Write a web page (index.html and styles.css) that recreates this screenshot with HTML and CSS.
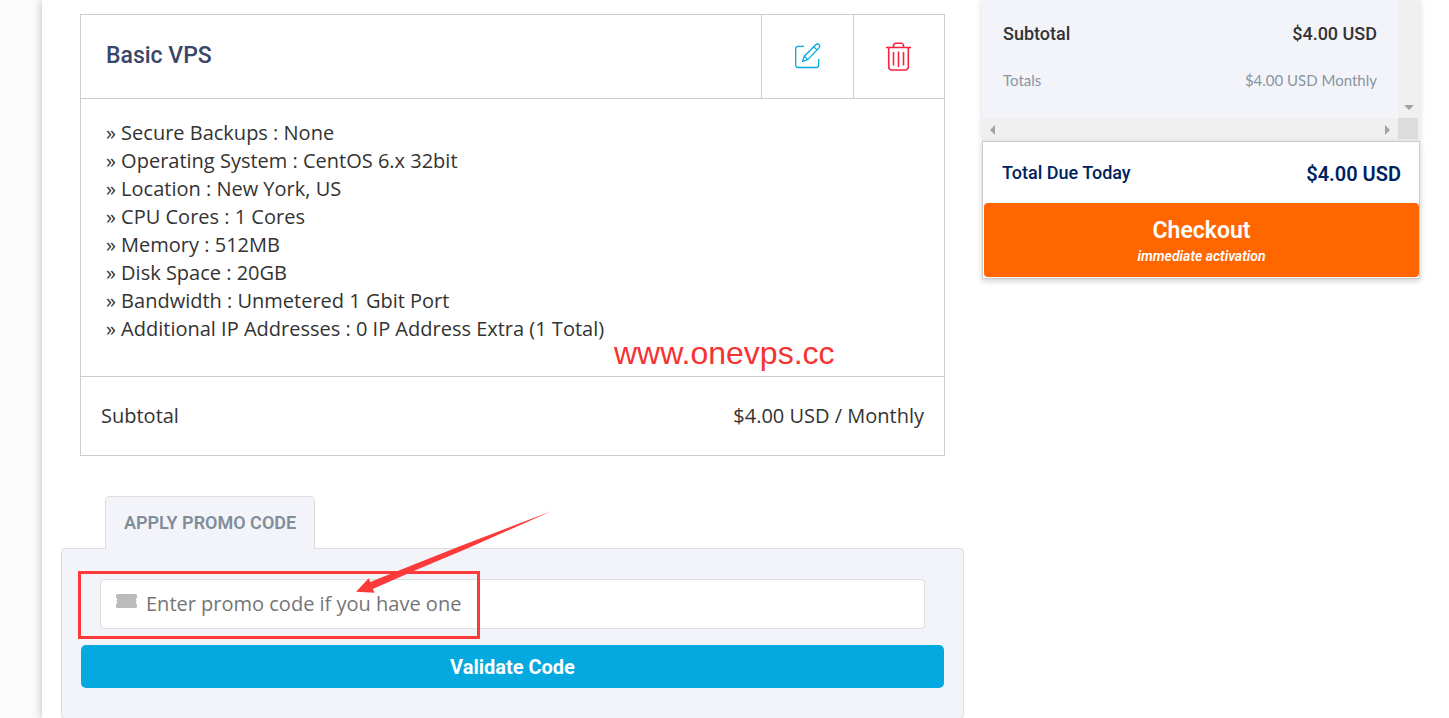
FILE: index.html
```html
<!DOCTYPE html>
<html lang="en">
<head>
  <meta charset="UTF-8">
  <meta name="viewport" content="width=device-width, initial-scale=1.0">
  <title>Review &amp; Checkout</title>
  <link rel="stylesheet" href="styles.css">
</head>
<body>
  <div class="page">
    <main class="cart">
      <section class="order">
        <div class="order-head">
          <h2 class="order-name">Basic VPS</h2>
          <button type="button" class="order-action edit" aria-label="Edit">
            <svg width="26" height="26" viewBox="0 0 26 26" fill="none" stroke="currentColor" stroke-width="1.3" stroke-linejoin="round">
              <path d="M9 3.300H3.200A2.500 2.500 0 0 0 .7 5.800v16.200a2.500 2.500 0 0 0 2.500 2.500h18a2.500 2.500 0 0 0 2.500-2.500v-6"/>
              <path d="M7.500 18.500l1.800-5.200L20.800 1.700q1.600-1.500 3.200 0t0 3.200L12.700 16.600z"/>
              <path d="M9.300 13.300l3.400 3.300M18.800 3.700l3.400 3.400"/>
            </svg>
          </button>
          <button type="button" class="order-action remove" aria-label="Remove">
            <svg width="26" height="30" viewBox="0 0 26 30" fill="none" stroke="currentColor" stroke-width="1.600">
              <path d="M0 5.500h25M2.700 5.500v19.500a3 3 0 0 0 3 3h13.600a3 3 0 0 0 3-3V5.500M7.500 5V3.500A2.200 2.200 0 0 1 9.700 1.300h5.600A2.200 2.200 0 0 1 17.500 3.500V5"/>
              <path d="M7.500 10v13.500M12.500 9.500v15.500M17.500 10v13.500"/>
            </svg>
          </button>
        </div>
        <ul class="order-options">
          <li>» Secure Backups : None</li>
          <li>» Operating System : CentOS 6.x 32bit</li>
          <li>» Location : New York, US</li>
          <li>» CPU Cores : 1 Cores</li>
          <li>» Memory : 512MB</li>
          <li>» Disk Space : 20GB</li>
          <li>» Bandwidth : Unmetered 1 Gbit Port</li>
          <li>» Additional IP Addresses : 0 IP Address Extra (1 Total)</li>
        </ul>
        <div class="order-subtotal">
          <span>Subtotal</span>
          <span>$4.00 USD / Monthly</span>
        </div>
        <div class="site-mark">www.onevps.cc</div>
      </section>

      <section class="promo">
        <button type="button" class="promo-tab">APPLY PROMO CODE</button>
        <form class="promo-form">
          <label class="promo-field">
            <svg class="ticket" width="21" height="14" viewBox="0 0 21 14" aria-hidden="true">
              <path fill="#bbb" d="M1.500 0h18A1.500 1.500 0 0 1 21 1.500V4q-1.200.3-1.200 1.500T21 7q-1.200.4-1.200 1.500T21 10v2.500a1.500 1.500 0 0 1-1.500 1.500h-18A1.500 1.500 0 0 1 0 12.500V10q1.200-.3 1.200-1.500T0 7q1.200-.4 1.200-1.500T0 4V1.500A1.500 1.500 0 0 1 1.500 0z"/>
            </svg>
            <input type="text" name="promocode" placeholder="Enter promo code if you have one" aria-label="Promo code">
          </label>
          <button type="submit" class="validate">Validate Code</button>
        </form>
        <div class="marker"></div>
        <svg class="arrow" width="196" height="82" viewBox="0 0 196 82" aria-hidden="true">
          <path fill="#fc3a3a" d="M0 80.700L12.700 67.300 14.300 71 34 63 107 34 195.700 0 110 38 60 59 16.700 78 18.700 81.700z"/>
        </svg>
      </section>
    </main>

    <aside class="summary">
      <div class="summary-scroll">
        <div class="summary-rows">
          <div class="row subtotal"><span>Subtotal</span><span>$4.00 USD</span></div>
          <div class="row totals"><span>Totals</span><span>$4.00 USD Monthly</span></div>
        </div>
        <div class="bar-y"><i class="tri down"></i></div>
        <div class="bar-x"><i class="tri left"></i><i class="tri right"></i></div>
        <div class="bar-corner"></div>
      </div>
      <div class="due">
        <div class="due-row">
          <span>Total Due Today</span>
          <strong>$4.00 USD</strong>
        </div>
        <button type="button" class="checkout">
          Checkout
          <em>immediate activation</em>
        </button>
      </div>
    </aside>
  </div>
</body>
</html>
```
FILE: styles.css
```css
* {
  box-sizing: border-box;
}
body {
  margin: 0;
  background: #fcfcfc;
  color: #333;
  font-family: "Open Sans", sans-serif;
  font-size: 20px;
  line-height: 28px;
}
button {
  border: 0;
  padding: 0;
  font-family: Roboto, sans-serif;
  cursor: pointer;
}
.page {
  min-height: 100vh;
  margin-left: 42px;
  padding: 0 29px 0 19px;
  display: grid;
  grid-template-columns: 903fr 438fr;
  gap: 18px;
  align-items: start;
  background: #fff;
  box-shadow: 0 0 10px rgba(0, 0, 0, 0.25);
}
.cart {
  padding-top: 14px;
}

/* order */
.order {
  position: relative;
  margin: 0 19px;
  border: 1px solid #ccc;
}
.order-head {
  display: flex;
  height: 84px;
  border-bottom: 1px solid #ccc;
}
.order-name {
  flex: 1;
  margin: 0;
  padding: 27px 25px;
  color: #3a4668;
  font: 500 23px/28px Roboto, sans-serif;
}
.order-action {
  width: 92px;
  display: flex;
  align-items: center;
  justify-content: center;
  border-left: 1px solid #ccc;
  background: #fff;
}
.edit {
  padding-bottom: 2px;
  color: #03a9df;
}
.remove {
  width: 91px;
  color: #f8233e;
}
.order-options {
  margin: 0;
  padding: 20px 25px 33px;
  list-style: none;
  border-bottom: 1px solid #ccc;
}
.order-subtotal {
  display: flex;
  justify-content: space-between;
  padding: 25px 20px;
}
.site-mark {
  position: absolute;
  left: 533px;
  bottom: 84px;
  color: #f43333;
  font: 32px/36px "Liberation Sans", sans-serif;
}

/* promo code */
.promo {
  position: relative;
  margin-top: 40px;
}
.promo-tab {
  position: relative;
  display: block;
  height: 53px;
  margin: 0 0 -1px 44px;
  padding: 0 18px 2px;
  border: 1px solid #ddd;
  border-bottom: 0;
  border-radius: 5px 5px 0 0;
  background: #f3f4f9;
  color: #7f8d9b;
  font-size: 18px;
  font-weight: 600;
}
.promo-form {
  padding: 30px 19px;
  border: 1px solid #ddd;
  border-radius: 4px;
  background: #f3f4f9;
}
.promo-field {
  display: flex;
  align-items: center;
  gap: 9px;
  height: 50px;
  margin: 0 19px 16px;
  padding: 0 15px;
  border: 1px solid #ddd;
  border-radius: 4px;
  background: #fff;
}
.ticket {
  margin-bottom: 6px;
}
.promo-field input {
  flex: 1;
  min-width: 0;
  padding: 0;
  border: 0;
  outline: 0;
  background: none;
  color: #333;
  font: 20px/28px "Open Sans", sans-serif;
}
.promo-field input::placeholder {
  color: #757575;
}
.validate {
  display: block;
  width: 100%;
  height: 43px;
  border-radius: 5px;
  background: #03a9df;
  color: #fff;
  font-size: 20px;
  font-weight: 700;
}
.marker {
  position: absolute;
  left: 17px;
  top: 75px;
  width: 402px;
  height: 68px;
  border: 3px solid #fc3a3a;
  pointer-events: none;
}
.arrow {
  position: absolute;
  left: 295px;
  top: 15px;
  pointer-events: none;
}

/* order summary */
.summary {
  font-family: Roboto, sans-serif;
}
.summary-scroll {
  display: grid;
  grid-template-columns: 1fr 22px;
  grid-template-rows: 118px 23px;
  background: #f0f0f0;
  box-shadow: 0 0 6px rgba(0, 0, 0, 0.15);
}
.summary-rows {
  padding: 20px 21px 0;
  background: #f3f4f9;
}
.row {
  display: flex;
  justify-content: space-between;
}
.subtotal {
  margin-bottom: 18px;
  font-size: 18px;
  font-weight: 500;
}
.totals {
  color: #8895a2;
  font-family: Lato, sans-serif;
  font-size: 15px;
}
.bar-y {
  display: flex;
  justify-content: center;
  align-items: flex-end;
  padding-bottom: 8px;
}
.bar-x {
  display: flex;
  justify-content: space-between;
  align-items: center;
  padding: 0 8px;
}
.bar-corner {
  margin: 0 2px 2px 0;
  background: #dcdcdc;
}
.tri {
  border: 5px solid transparent;
}
.down {
  border-top-color: #a3a3a3;
  border-bottom: 0;
}
.left {
  border-right-color: #a3a3a3;
  border-left: 0;
}
.right {
  border-left-color: #a3a3a3;
  border-right: 0;
}
.due {
  position: relative;
  padding: 0 0 1px 1px;
  border: 1px solid #ccc;
  background: #fff;
  box-shadow: 0 2px 6px rgba(0, 0, 0, 0.2);
}
.due-row {
  display: flex;
  justify-content: space-between;
  align-items: center;
  height: 61px;
  padding: 0 18px;
  color: #00235f;
  font-size: 18px;
  font-weight: 500;
}
.due-row strong {
  padding-top: 2px;
  font-size: 20px;
  font-weight: 600;
}
.checkout {
  display: block;
  width: 100%;
  height: 74px;
  padding-top: 4px;
  border-radius: 4px;
  background: #ff6600;
  color: #fff;
  font-size: 23px;
  font-weight: 600;
  line-height: 28px;
}
.checkout em {
  display: block;
  font-size: 14px;
  font-weight: 600;
  line-height: 22px;
}
```
